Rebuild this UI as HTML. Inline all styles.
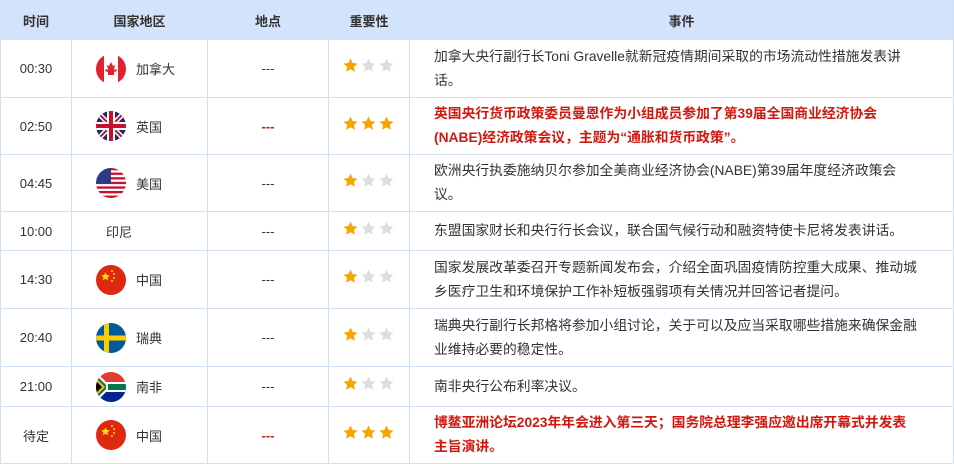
<!DOCTYPE html>
<html><head><meta charset="utf-8"><style>
body{margin:0;background:#fff;font-family:"Liberation Sans","Noto Sans CJK SC",sans-serif;font-size:13px;color:#333}
table{border-collapse:collapse;width:954px;table-layout:fixed;position:absolute;left:0;top:0}
td,th{border:1px solid #d3dff3;padding:0;text-align:center}
th{background:#d3e3fb;height:38px;font-weight:bold;color:#333;font-size:13px}
.c{display:flex;align-items:center;padding-left:24px}
.f{width:30px;height:30px;border-radius:50%;overflow:hidden;margin-right:10px;flex:none}
.s svg{display:block;margin:-6px auto 0}
.e{text-align:left;padding:0 0 0 24px;line-height:24px;white-space:nowrap;overflow:hidden;font-size:13.8px}
.r{color:#d2180e;font-weight:bold}
.d{color:#d2180e;font-weight:bold}
</style></head><body>
<svg width="0" height="0" style="position:absolute"><defs><path id="st" d="M7.5 0.5l2.1 4.5 4.9.6-3.6 3.3 1 4.9L7.5 11.3 3.1 13.8l1-4.9L.5 5.6l4.9-.6z"/></defs></svg>
<table>
<colgroup><col style="width:71px"><col style="width:136px"><col style="width:121px"><col style="width:81px"><col></colgroup>
<tr><th>时间</th><th>国家地区</th><th>地点</th><th>重要性</th><th>事件</th></tr>
<tr style="height:58px"><td>00:30</td><td><div class="c"><svg class="f" viewBox="0 0 30 30"><rect width="30" height="30" fill="#fff"/><rect width="8" height="30" fill="#e0232e"/><rect x="22" width="8" height="30" fill="#e0232e"/><path d="M15 8l2 4 2-1-1 5 2-1 1 2-3 1 0 3h-6l0-3-3-1 1-2 2 1-1-5 2 1z" fill="#e0232e"/></svg>加拿大</div></td><td>---</td><td class="s"><svg width="52" height="15"><use href="#st" fill="#f7a400"/><use href="#st" x="18" fill="#ddd"/><use href="#st" x="36" fill="#ddd"/></svg></td><td class="e">加拿大央行副行长Toni Gravelle就新冠疫情期间采取的市场流动性措施发表讲<br>话。</td></tr>
<tr style="height:57px"><td>02:50</td><td><div class="c"><svg class="f" viewBox="0 0 30 30"><rect width="30" height="30" fill="#1c2d6b"/><path d="M0 0L30 30M30 0L0 30" stroke="#fff" stroke-width="5"/><path d="M0 0L30 30M30 0L0 30" stroke="#c8102e" stroke-width="2"/><path d="M15 0V30M0 15H30" stroke="#fff" stroke-width="8"/><path d="M15 0V30M0 15H30" stroke="#c8102e" stroke-width="4"/></svg>英国</div></td><td class="d">---</td><td class="s"><svg width="52" height="15"><use href="#st" fill="#f7a400"/><use href="#st" x="18" fill="#f7a400"/><use href="#st" x="36" fill="#f7a400"/></svg></td><td class="e r">英国央行货币政策委员曼恩作为小组成员参加了第39届全国商业经济协会<br>(NABE)经济政策会议，主题为“通胀和货币政策”。</td></tr>
<tr style="height:57px"><td>04:45</td><td><div class="c"><svg class="f" viewBox="0 0 30 30"><rect width="30" height="30" fill="#fff"/><g fill="#c8102e"><rect y="0" width="30" height="2.3"/><rect y="4.6" width="30" height="2.3"/><rect y="9.2" width="30" height="2.3"/><rect y="13.8" width="30" height="2.3"/><rect y="18.4" width="30" height="2.3"/><rect y="23" width="30" height="2.3"/><rect y="27.6" width="30" height="2.4"/></g><rect width="15" height="16" fill="#2b3b85"/></svg>美国</div></td><td>---</td><td class="s"><svg width="52" height="15"><use href="#st" fill="#f7a400"/><use href="#st" x="18" fill="#ddd"/><use href="#st" x="36" fill="#ddd"/></svg></td><td class="e">欧洲央行执委施纳贝尔参加全美商业经济协会(NABE)第39届年度经济政策会<br>议。</td></tr>
<tr style="height:39px"><td>10:00</td><td><div class="c" style="padding-left:34px">印尼</div></td><td>---</td><td class="s"><svg width="52" height="15"><use href="#st" fill="#f7a400"/><use href="#st" x="18" fill="#ddd"/><use href="#st" x="36" fill="#ddd"/></svg></td><td class="e">东盟国家财长和央行行长会议，联合国气候行动和融资特使卡尼将发表讲话。</td></tr>
<tr style="height:58px"><td>14:30</td><td><div class="c"><svg class="f" viewBox="0 0 30 30"><rect width="30" height="30" fill="#de2910"/><g fill="#ffde00"><use href="#st" transform="translate(5,7) scale(0.6)"/><circle cx="16" cy="6" r="1"/><circle cx="18" cy="9" r="1"/><circle cx="18" cy="13" r="1"/><circle cx="16" cy="16" r="1"/></g></svg>中国</div></td><td>---</td><td class="s"><svg width="52" height="15"><use href="#st" fill="#f7a400"/><use href="#st" x="18" fill="#ddd"/><use href="#st" x="36" fill="#ddd"/></svg></td><td class="e">国家发展改革委召开专题新闻发布会，介绍全面巩固疫情防控重大成果、推动城<br>乡医疗卫生和环境保护工作补短板强弱项有关情况并回答记者提问。</td></tr>
<tr style="height:58px"><td>20:40</td><td><div class="c"><svg class="f" viewBox="0 0 30 30"><rect width="30" height="30" fill="#005b99"/><rect x="8" width="5" height="30" fill="#fecc00"/><rect y="12.5" width="30" height="5" fill="#fecc00"/></svg>瑞典</div></td><td>---</td><td class="s"><svg width="52" height="15"><use href="#st" fill="#f7a400"/><use href="#st" x="18" fill="#ddd"/><use href="#st" x="36" fill="#ddd"/></svg></td><td class="e">瑞典央行副行长邦格将参加小组讨论，关于可以及应当采取哪些措施来确保金融<br>业维持必要的稳定性。</td></tr>
<tr style="height:40px"><td>21:00</td><td><div class="c"><svg class="f" viewBox="0 0 30 30"><rect width="30" height="15" fill="#e03c31"/><rect y="15" width="30" height="15" fill="#002395"/><path d="M0 0L15 15L0 30" fill="#fff"/><path d="M0 3L12 15L0 27" fill="#007a4d"/><rect x="10" y="10" width="20" height="10" fill="#fff"/><rect x="12" y="12" width="18" height="6" fill="#007a4d"/><path d="M0 6L9 15L0 24" fill="#ffb612"/><path d="M0 9L6 15L0 21" fill="#000"/></svg>南非</div></td><td>---</td><td class="s"><svg width="52" height="15"><use href="#st" fill="#f7a400"/><use href="#st" x="18" fill="#ddd"/><use href="#st" x="36" fill="#ddd"/></svg></td><td class="e">南非央行公布利率决议。</td></tr>
<tr style="height:57px"><td>待定</td><td><div class="c"><svg class="f" viewBox="0 0 30 30"><rect width="30" height="30" fill="#de2910"/><g fill="#ffde00"><use href="#st" transform="translate(5,7) scale(0.6)"/><circle cx="16" cy="6" r="1"/><circle cx="18" cy="9" r="1"/><circle cx="18" cy="13" r="1"/><circle cx="16" cy="16" r="1"/></g></svg>中国</div></td><td class="d">---</td><td class="s"><svg width="52" height="15"><use href="#st" fill="#f7a400"/><use href="#st" x="18" fill="#f7a400"/><use href="#st" x="36" fill="#f7a400"/></svg></td><td class="e r">博鳌亚洲论坛2023年年会进入第三天；国务院总理李强应邀出席开幕式并发表<br>主旨演讲。</td></tr>
</table>
</body></html>
